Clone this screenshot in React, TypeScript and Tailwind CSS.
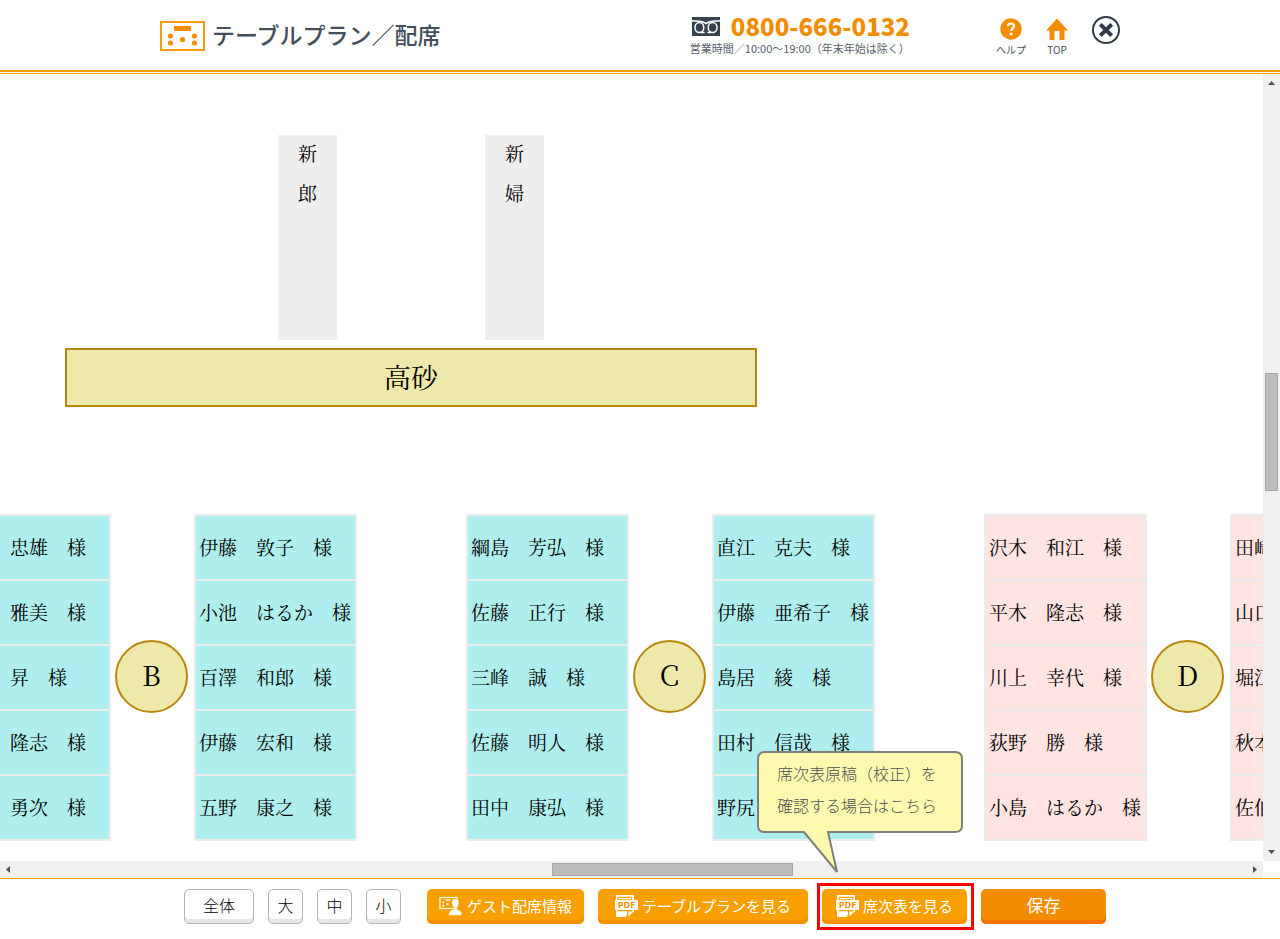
import type { ReactNode } from 'react'

type Table = {
  id: string
  color: string
  left: string[]
  right: string[]
  leftPad?: string
}

const BLUE = 'bg-[#afeeee]'
const PINK = 'bg-[#ffe4e1]'

const TABLES: Table[] = [
  {
    id: 'B',
    color: BLUE,
    leftPad: 'pl-[60px]',
    left: ['忠雄　様', '雅美　様', '昇　様', '隆志　様', '勇次　様'],
    right: ['伊藤　敦子　様', '小池　はるか　様', '百澤　和郎　様', '伊藤　宏和　様', '五野　康之　様'],
  },
  {
    id: 'C',
    color: BLUE,
    left: ['綱島　芳弘　様', '佐藤　正行　様', '三峰　誠　様', '佐藤　明人　様', '田中　康弘　様'],
    right: ['直江　克夫　様', '伊藤　亜希子　様', '島居　綾　様', '田村　信哉　様', '野尻'],
  },
  {
    id: 'D',
    color: PINK,
    left: ['沢木　和江　様', '平木　隆志　様', '川上　幸代　様', '荻野　勝　様', '小島　はるか　様'],
    right: ['田崎', '山口', '堀江', '秋本', '佐伯'],
  },
]

/* ── Icons ── */
function PlanIcon() {
  return (
    <svg width="45" height="30" viewBox="0 0 45 30" className="mt-1 shrink-0" aria-hidden="true">
      <rect x="1" y="1" width="43" height="28" fill="none" stroke="#f89a10" strokeWidth="2" />
      <g fill="#f48c00">
        <rect x="14" y="5" width="17" height="5" />
        <circle cx="10.5" cy="15" r="2.6" />
        <circle cx="10.5" cy="22" r="2.6" />
        <circle cx="22.5" cy="18.5" r="2.6" />
        <circle cx="34.5" cy="15" r="2.6" />
        <circle cx="34.5" cy="22" r="2.6" />
      </g>
    </svg>
  )
}

function FreeDialIcon() {
  return (
    <svg width="28" height="19" viewBox="0 0 28 19" aria-hidden="true">
      <rect width="28" height="19" fill="#35434f" />
      <g fill="none" stroke="#fff" strokeWidth="1.5" strokeLinecap="round">
        <path d="M0 3.8C5 4.4 10 3.4 14 6.6C18 3.4 23 4.4 28 3.8" />
        <ellipse cx="7.4" cy="10.6" rx="4.4" ry="5" />
        <ellipse cx="20.6" cy="10.6" rx="4.4" ry="5" />
        <path d="M9 15.5H12M16 15.5H19" />
      </g>
    </svg>
  )
}

function HelpIcon() {
  return (
    <svg width="22" height="22" viewBox="0 0 22 22" aria-hidden="true">
      <circle cx="11" cy="11" r="10.7" fill="#f48c00" />
      <path d="M7.9 8.2C8.1 6.2 9.4 5.5 11 5.5C12.8 5.5 14 6.5 14 8C14 10.1 11.2 10.2 11.2 12.9" fill="none" stroke="#fff" strokeWidth="2.2" />
      <circle cx="11.1" cy="15.9" r="1.5" fill="#fff" />
    </svg>
  )
}

function HomeIcon() {
  return (
    <svg width="22" height="22" viewBox="0 0 22 22" aria-hidden="true">
      <path d="M11 0.5L22 12.5H18.5V22H13.5V13H8.5V22H3.5V12.5H0Z" fill="#f48c00" />
    </svg>
  )
}

function CloseIcon() {
  return (
    <svg width="28" height="28" viewBox="0 0 28 28" aria-hidden="true">
      <circle cx="14" cy="14" r="13" fill="none" stroke="#2f3c48" strokeWidth="2" />
      <path d="M8.3 8.3L19.7 19.7M19.7 8.3L8.3 19.7" stroke="#2f3c48" strokeWidth="4" />
    </svg>
  )
}

function GuestIcon() {
  return (
    <svg width="24" height="20" viewBox="0 0 24 20" className="shrink-0" aria-hidden="true">
      <rect x="1" y="1.5" width="17" height="11" fill="none" stroke="#fff" strokeWidth="1.2" />
      <g fill="#fff">
        <rect x="6.5" y="3.4" width="5" height="1.4" />
        <rect x="3.4" y="5.4" width="1.7" height="1.7" />
        <rect x="3.4" y="8.8" width="1.7" height="1.7" />
        <rect x="7.5" y="7" width="2" height="2" />
      </g>
      <path
        d="M16.4 2.6C18.9 2.6 20 4.2 20 6.6C20 8.8 19.2 10.2 18.2 11.4V13.4C20.8 14.2 23 15 23.2 19.4H9.4C9.6 15 11.8 14.2 14.6 13.4V11.4C13.5 10.2 12.7 8.8 12.7 6.6C12.7 4.2 13.9 2.6 16.4 2.6Z"
        fill="#fff"
        stroke="#f9a000"
        strokeWidth="0.7"
      />
    </svg>
  )
}

function PdfIcon() {
  return (
    <svg width="23" height="22" viewBox="0 0 23 22" className="shrink-0" aria-hidden="true">
      <path d="M1.8 5V0.9H18.2V5" fill="none" stroke="#fff" strokeWidth="1.6" />
      <path d="M3.5 3.6H16.5" stroke="#fff" strokeWidth="1.2" />
      <rect y="5" width="23" height="10" fill="#fff" />
      <text x="11.5" y="13.3" textAnchor="middle" fontSize="9" fontWeight="700" fontFamily="Open Sans, sans-serif" fill="#f59000">
        PDF
      </text>
      <path d="M1 16.2H12V18.6Q12 20 10.8 22H1Z" fill="#fff" />
      <path d="M13.4 21.4V16.6H18.6Z" fill="#fff" />
      <path d="M1 15H2.6V17H1ZM17.4 15H19V16.8H17.4Z" fill="#fff" />
    </svg>
  )
}

/* ── Floor plan ── */
function Seats({ names, color, pad = 'pl-[3px]' }: { names: string[]; color: string; pad?: string }) {
  return (
    <ul className="w-[163px] shrink-0 border-x-2 border-b-2 border-[#ececec]">
      {names.map(name => (
        <li key={name} className={`flex h-[65px] items-center border-t-2 border-[#ececec] whitespace-nowrap text-[19px] ${pad} ${color}`}>
          {name}
        </li>
      ))}
    </ul>
  )
}

function GuestTable({ table }: { table: Table }) {
  return (
    <div className="flex shrink-0 items-center">
      <Seats names={table.left} color={table.color} pad={table.leftPad} />
      <div className="mr-1.5 mb-[3px] ml-1 flex size-[73px] items-center justify-center rounded-full border-2 border-[#b8860b] bg-[#eee8aa] pb-1 text-[28px] leading-none">
        {table.id}
      </div>
      <Seats names={table.right} color={table.color} />
    </div>
  )
}

function HeadSeat({ chars }: { chars: string[] }) {
  return (
    <div className="flex h-[205px] w-[59px] flex-col items-center gap-1 bg-[#eee] text-[19px] leading-9">
      {chars.map(c => <span key={c}>{c}</span>)}
    </div>
  )
}

function FloorPlan() {
  return (
    <main className="relative min-w-0 flex-1 overflow-hidden font-['Noto_Serif_CJK_JP','Liberation_Serif','Noto_Sans_CJK_JP',serif] text-black">
      <div className="absolute top-[61px] left-[65px] w-[692px]">
        <div className="mb-2 flex justify-center gap-[148px]">
          <HeadSeat chars={['新', '郎']} />
          <HeadSeat chars={['新', '婦']} />
        </div>
        <div className="flex h-[59px] items-center justify-center border-2 border-[#b8860b] bg-[#eee8aa] text-[27px]">
          高砂
        </div>
      </div>
      <div className="absolute top-[440px] left-[-52px] flex gap-[109px]">
        {TABLES.map(t => <GuestTable key={t.id} table={t} />)}
      </div>
    </main>
  )
}

/* ── Scrollbars ── */
function Arrow({ d }: { d: string }) {
  return (
    <svg width="17" height="17" viewBox="0 0 17 17" className="shrink-0" aria-hidden="true">
      <path d={d} fill="#505050" />
    </svg>
  )
}

function VerticalBar() {
  return (
    <div className="flex w-[17px] shrink-0 flex-col items-center bg-[#f0f0f0]">
      <Arrow d="M5 11H12L8.5 7Z" />
      <div className="grow-[282] basis-0" />
      <div className="w-[13px] grow-[116] basis-0 border border-[#a8a8a8] bg-[#bcbcbc]" />
      <div className="grow-[353] basis-0" />
      <Arrow d="M5 6H12L8.5 10Z" />
    </div>
  )
}

function HorizontalBar() {
  return (
    <div className="mr-[17px] flex h-[17px] shrink-0 items-center bg-[#f0f0f0]">
      <Arrow d="M10 5V12L6 8.5Z" />
      <div className="grow-[535] basis-0" />
      <div className="h-[13px] grow-[239] basis-0 border border-[#a8a8a8] bg-[#bcbcbc]" />
      <div className="grow-[453] basis-0" />
      <Arrow d="M7 5V12L11 8.5Z" />
    </div>
  )
}

/* ── Footer ── */
function SizeButton({ label, width }: { label: string; width: string }) {
  return (
    <button className={`h-[35px] rounded-[5px] border border-[#b4b4b4] bg-white pb-1 text-base leading-none font-light text-black shadow-[inset_0_-4px_0_#e6e6e6] ${width}`}>
      {label}
    </button>
  )
}

function ActionButton({ width, children }: { width: string; children: ReactNode }) {
  return (
    <button className={`flex h-[35px] items-center justify-center gap-1 rounded-[5px] bg-[#f9a000] pb-0.5 text-[15px] leading-none whitespace-nowrap text-white shadow-[inset_0_-4px_0_#f59000] ${width}`}>
      {children}
    </button>
  )
}

function Callout() {
  return (
    <div role="tooltip" className="pointer-events-none absolute bottom-[50px] left-[-65px] h-[124px] w-[206px]">
      <svg width="206" height="124" viewBox="0 0 206 124" className="absolute inset-0" aria-hidden="true">
        <path
          d="M8 2H198Q205 2 205 9V76Q205 82 198 82H71L80 122L47 82H8Q1 82 1 76V9Q1 2 8 2Z"
          fill="#fdfab0"
          stroke="#808078"
          strokeWidth="2"
        />
      </svg>
      <p className="relative pt-[7px] pl-5 text-base leading-8 font-light whitespace-nowrap text-[#505050]">
        席次表原稿（校正）を
        <br />
        確認する場合はこちら
      </p>
    </div>
  )
}

export default function App() {
  return (
    <div className="flex h-screen flex-col overflow-hidden bg-white font-['Noto_Sans_CJK_JP',sans-serif]">
      <header className="shrink-0 border-b border-[#ff9900]">
        <div className="mb-px border-b-2 border-[#ff9900]">
          <div className="mx-auto flex h-[70px] max-w-[960px] items-start">
            <div className="flex items-center gap-[7px] pt-[17px]">
              <PlanIcon />
              <h1 className="text-[23px] leading-8 font-medium text-[#434f5b]">テーブルプラン／配席</h1>
            </div>
            <div className="ml-auto pt-[13px]">
              <div className="flex items-center gap-[11px] pl-0.5">
                <FreeDialIcon />
                <span className="text-2xl leading-[26px] font-black text-[#f48c00]">0800-666-0132</span>
              </div>
              <p className="mt-px text-[11px] leading-4 whitespace-nowrap text-[#56616b]">営業時間／10:00〜19:00（年末年始は除く）</p>
            </div>
            <nav className="ml-[86px] flex items-start text-[10px] leading-4 text-[#434f5b]">
              <a href="#help" className="mr-5 flex w-[30px] flex-col items-center gap-0.5 pt-[18px] whitespace-nowrap">
                <HelpIcon />
                ヘルプ
              </a>
              <a href="#top" className="flex w-[22px] flex-col items-center gap-0.5 pt-[18px]">
                <HomeIcon />
                TOP
              </a>
              <button aria-label="閉じる" className="mt-4 ml-6">
                <CloseIcon />
              </button>
            </nav>
          </div>
        </div>
      </header>

      <div className="flex min-h-0 flex-1">
        <FloorPlan />
        <VerticalBar />
      </div>
      <HorizontalBar />

      <footer className="shrink-0 border-t border-[#ff9900]">
        <div className="mx-auto flex h-[60px] max-w-[960px] items-start gap-3.5 pt-2.5 pl-6">
          <SizeButton label="全体" width="w-[70px]" />
          <SizeButton label="大" width="w-[35px]" />
          <SizeButton label="中" width="w-[35px]" />
          <SizeButton label="小" width="w-[35px]" />
          <div className="ml-3">
            <ActionButton width="w-[157px]">
              <GuestIcon />
              ゲスト配席情報
            </ActionButton>
          </div>
          <ActionButton width="w-[210px]">
            <PdfIcon />
            テーブルプランを見る
          </ActionButton>
          <div className="relative">
            <ActionButton width="w-[145px]">
              <PdfIcon />
              席次表を見る
            </ActionButton>
            <div className="pointer-events-none absolute -top-1.5 -right-[7px] -bottom-1.5 -left-[5px] border-3 border-[#ff0000]" />
            <Callout />
          </div>
          <button className="h-[35px] w-[125px] rounded-[5px] bg-[#f48c00] pb-1 text-[17px] leading-none text-white shadow-[inset_0_-4px_0_#f57200]">
            保存
          </button>
        </div>
      </footer>
    </div>
  )
}
